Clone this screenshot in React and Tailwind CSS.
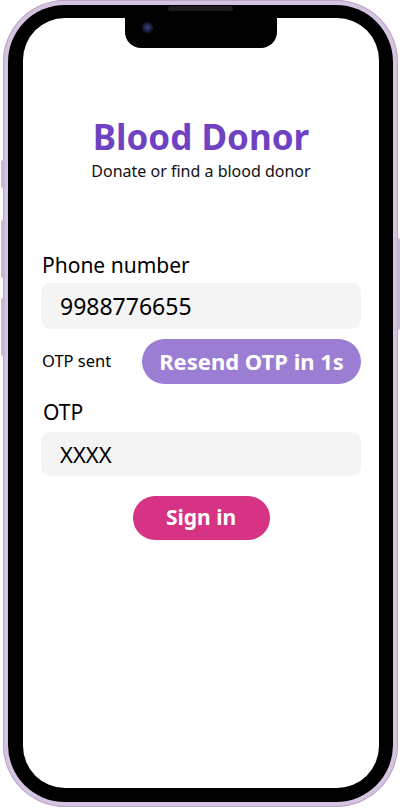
import { useState } from "react";

export default function App() {
  const [phone, setPhone] = useState("9988776655");
  const [otp, setOtp] = useState("");

  return (
    <div
      className="min-h-screen bg-white"
      style={{ fontFamily: "'Noto Sans', 'DejaVu Sans', sans-serif" }}
    >
      {/* PHONE FRAME */}
      <div className="relative ml-[3px] w-[395px] h-[807px]">
        {/* side buttons */}
        <div className="absolute left-[-2px] top-[160px] w-[4px] h-[28px] rounded-l-[2px] bg-[#c9b7d7]" />
        <div className="absolute left-[-2px] top-[220px] w-[4px] h-[58px] rounded-l-[2px] bg-[#c9b7d7]" />
        <div className="absolute left-[-2px] top-[298px] w-[4px] h-[58px] rounded-l-[2px] bg-[#c9b7d7]" />
        <div className="absolute right-[-2px] top-[238px] w-[4px] h-[92px] rounded-r-[2px] bg-[#c9b7d7]" />

        <div className="h-full rounded-[62px] bg-[#d3c4df] p-[5px] shadow-[inset_0_0_0_1px_#b9a7c8]">
          <div className="h-full rounded-[57px] bg-black p-[14px] pt-[13px] pl-[15px]">
            <div className="relative h-full rounded-[42px] bg-white overflow-hidden">
              {/* notch */}
              <div className="absolute left-1/2 -translate-x-1/2 top-0 w-[152px] h-[30px] rounded-b-[16px] bg-black" />
              <div className="absolute left-[119px] top-[4px] w-[11px] h-[11px] rounded-full bg-[radial-gradient(circle,#3b4a8a_0%,#1a2040_45%,#05060d_100%)]" />

              {/* CONTENT */}
              <div className="flex flex-col px-[18px] pt-[97px]">
                <h1 className="text-center text-[35px] leading-[44px] font-bold text-[#6f42c1]">
                  Blood Donor
                </h1>
                <p className="text-center text-[16px] leading-[20px] text-[#111] mt-[2px]">
                  Donate or find a blood donor
                </p>

                <label className="mt-[70px] pl-[1px] text-[21px] leading-[28px] text-black">
                  Phone number
                </label>
                <input
                  value={phone}
                  onChange={(e) => setPhone(e.target.value)}
                  className="mt-[4px] h-[46px] w-full rounded-[9px] bg-[#f4f4f4] px-[19px] text-[23px] text-black outline-none"
                />

                <div className="mt-[10px] flex items-center justify-between">
                  <span className="pl-[1px] text-[16.5px] text-black">OTP sent</span>
                  <button className="h-[45px] w-[219px] rounded-full bg-[#9b7dd3] text-[22px] font-bold text-white">
                    Resend OTP in 1s
                  </button>
                </div>

                <label className="mt-[14px] pl-[2px] text-[21px] leading-[28px] text-black">
                  OTP
                </label>
                <input
                  value={otp}
                  onChange={(e) => setOtp(e.target.value)}
                  placeholder="XXXX"
                  className="mt-[6px] h-[44px] w-full rounded-[9px] bg-[#f4f4f4] px-[19px] text-[22px] text-black placeholder:text-black outline-none"
                />

                <button className="mt-[20px] self-center h-[44px] w-[137px] rounded-full bg-[#d63384] text-[21px] font-bold text-white">
                  Sign in
                </button>
              </div>
            </div>
          </div>
        </div>

        {/* speaker */}
        <div className="absolute left-[165px] top-[6px] w-[65px] h-[5px] rounded-full bg-[#1c1c1c]" />
      </div>
    </div>
  );
}
